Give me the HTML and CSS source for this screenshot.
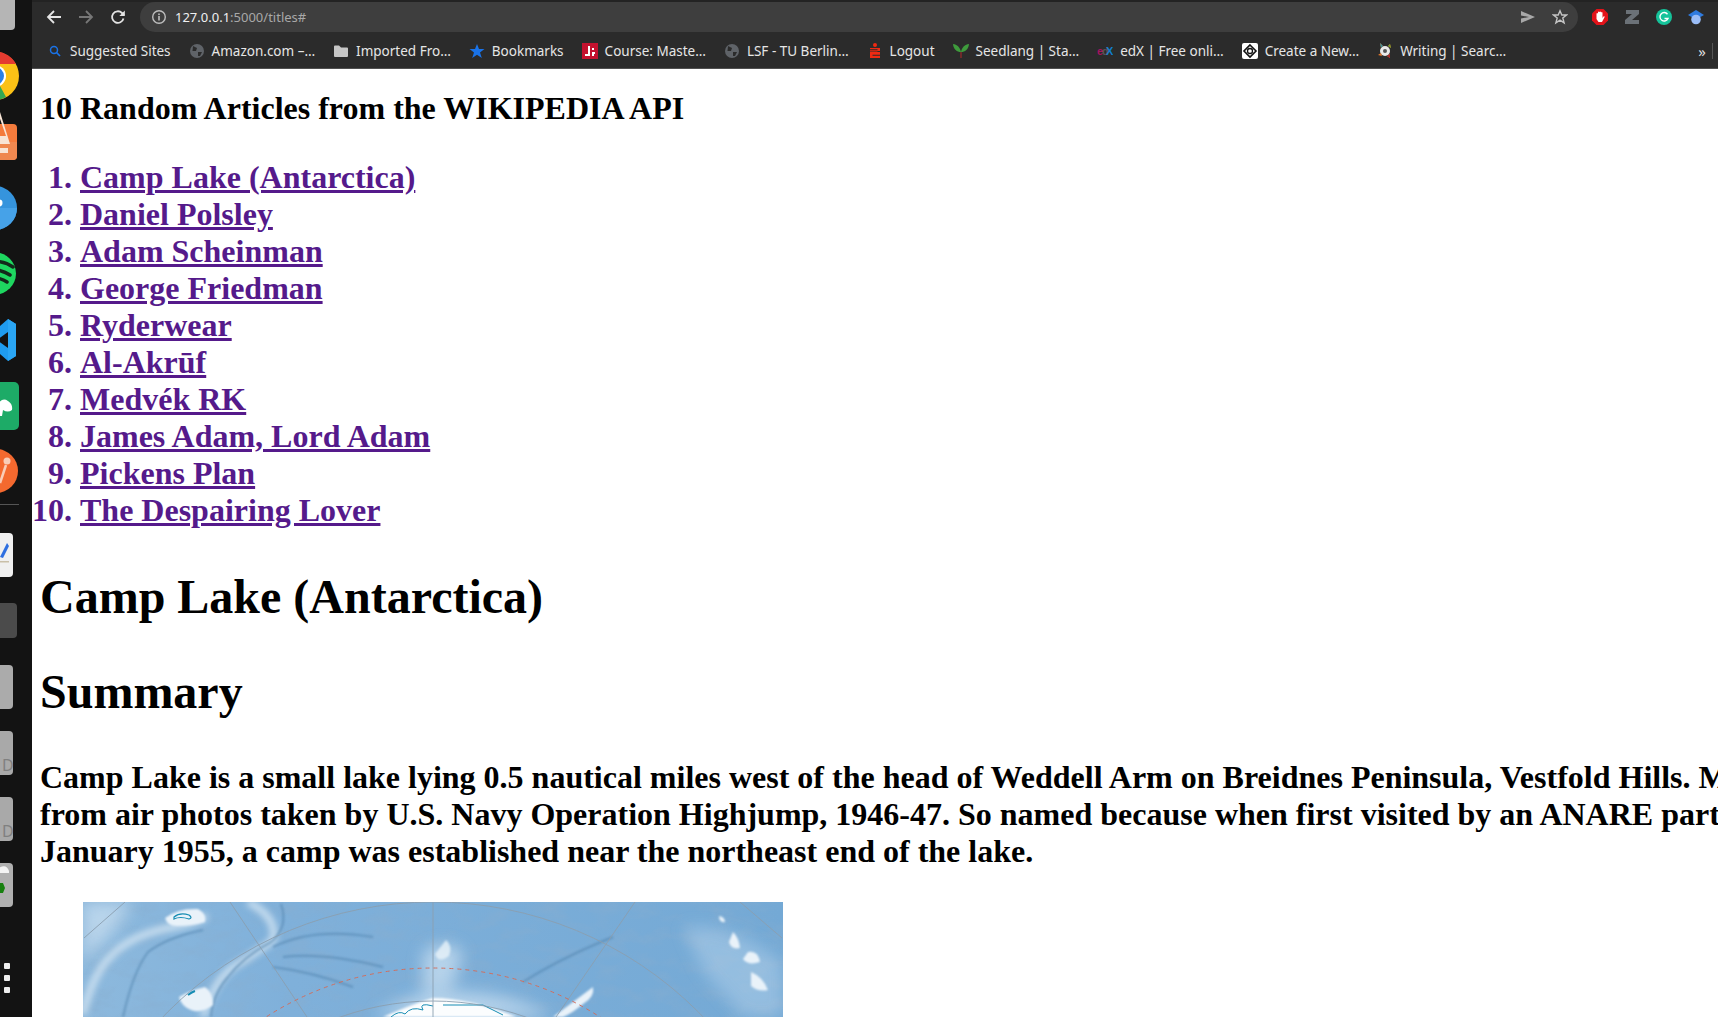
FILE: index.html
```html
<!DOCTYPE html>
<html lang="en">
<head>
<meta charset="utf-8">
<title>127.0.0.1:5000/titles#</title>
<link rel="stylesheet" href="styles.css">
</head>
<body>
<div class="desktop">
  <aside class="dock">
    <svg class="dock-art" width="32" height="1017" viewBox="0 0 32 1017">
      <rect x="-20" y="-10" width="35" height="40" rx="4" fill="#b5b5b5"/>
      <circle cx="-5" cy="76" r="24" fill="#fbc116"/>
      <path d="M-5 76 L-29 76 A24 24 0 0 1 16 64 L-5 64 Z" fill="#e53b30"/>
      <path d="M-5 76 L-5 100 A24 24 0 0 0 6 97 L0 86 Z" fill="#35a853"/>
      <circle cx="-5" cy="76" r="11" fill="#fff"/>
      <circle cx="-5" cy="76" r="9" fill="#2a80e8"/>
      <rect x="-25" y="124" width="42" height="36" rx="4" fill="#f47b3c"/>
      <path d="M-20 142 H17 V156 Q17 160 13 160 H-20 Z" fill="#ef8850"/>
      <path d="M0 112 L10 144 H-8 V136 H6 L-1 116 Z M-2 148 H8 V153 H-2 Z" fill="#f8e5d6"/>
      <circle cx="-5" cy="208" r="22" fill="#3594dd"/>
      <path d="M-27 208 H17 A22 22 0 0 1 -27 208" fill="#46a2e8"/>
      <circle cx="-1" cy="203" r="3.5" fill="#fff"/>
      <circle cx="-5" cy="273.500" r="21" fill="#1ed760"/>
      <path d="M-16 262 Q2 259 13 267 M-16 270 Q0 268 10 275 M-16 278 Q-2 276 7 282" fill="none" stroke="#13291b" stroke-width="3.500" stroke-linecap="round"/>
      <path d="M8 319 L16 324 V356 L8 361 L-10 345 V335 Z" fill="#1f9cf0"/>
      <path d="M8 319 L16 324 V356 L8 361 Z" fill="#2aa6f5"/>
      <path d="M8 332 V348 L-3 340 Z" fill="#131313"/>
      <path d="M-10 335 L-1 339 L-10 347 Z" fill="#0d74c4"/>
      <rect x="-25" y="382" width="44" height="48" rx="5" fill="#1dab67"/>
      <path d="M-4 408 Q1 396 8 401 Q13 404 12 410 Q8 413 3 410 L2 416 H-4 Z" fill="#fff"/>
      <circle cx="-4" cy="471" r="22" fill="#f4692f"/>
      <path d="M0 483 L6 465" stroke="#f9cdb8" stroke-width="2.500"/>
      <circle cx="7" cy="461" r="3.500" fill="#f9cdb8"/>
      <rect x="0" y="504" width="19" height="1" fill="#555"/>
      <rect x="-20" y="533" width="33" height="44" rx="4" fill="#f0f0f0"/>
      <path d="M0 557 L7 543 L9 546 L3 558 Z" fill="#2e6fe0"/>
      <rect x="0" y="561" width="9" height="1.500" fill="#c9bfa8"/>
      <rect x="-20" y="603" width="37" height="35" rx="4" fill="#4b4b4b"/>
      <rect x="-20" y="665" width="33" height="44" rx="4" fill="#ababab"/>
      <rect x="-20" y="731" width="33" height="44" rx="4" fill="#a9a9a9"/>
      <text class="dock-letter" x="2" y="771">D</text>
      <rect x="-20" y="797" width="33" height="44" rx="4" fill="#a9a9a9"/>
      <text class="dock-letter" x="2" y="837">D</text>
      <rect x="-20" y="863" width="33" height="44" rx="4" fill="#b0b0b0"/>
      <path d="M-4 870 Q6 862 9 871 L9 873 H-4 Z" fill="#f4f4f4"/>
      <path d="M-2 883 L3 883 L5 888 L3 893 L-2 893 Z" fill="#17800f"/>
      <rect x="4" y="963" width="6" height="6" rx="1" fill="#eee"/>
      <rect x="4" y="975" width="6" height="6" rx="1" fill="#eee"/>
      <rect x="4" y="987" width="6" height="6" rx="1" fill="#eee"/>
    </svg>
  </aside>

  <div class="browser">
    <header class="chrome">
      <div class="toolbar">
        <span class="tool"><svg width="16" height="16" viewBox="0 0 16 16"><path d="M15 8H2M8 2 2 8l6 6" class="ico-line"/></svg></span>
        <span class="tool"><svg width="16" height="16" viewBox="0 0 16 16"><path d="M1 8h13M8 2l6 6-6 6" class="ico-line ico-dim"/></svg></span>
        <span class="tool"><svg width="16" height="16" viewBox="0 0 16 16"><path d="M13.500 9.500A5.800 5.800 0 1 1 12 4L14 6" class="ico-line"/><path d="M14.800 1.500V7H9.300Z" class="ico-fill"/></svg></span>
        <div class="omnibox">
          <svg class="omni-info" width="16" height="16" viewBox="0 0 16 16"><circle cx="8" cy="8" r="6.300" fill="none" stroke="#bdbdbd" stroke-width="1.400"/><rect x="7.200" y="7" width="1.600" height="4.500" fill="#bdbdbd"/><rect x="7.200" y="4.500" width="1.600" height="1.600" fill="#bdbdbd"/></svg>
          <span class="url"><span class="url-host">127.0.0.1</span>:5000/titles#</span>
          <span class="omni-right">
            <svg width="16" height="14" viewBox="0 0 16 14"><path d="M1 1 15 7 1 13V8.500L9 7 1 5.500Z" fill="#a8a8a8"/></svg>
            <svg width="16" height="16" viewBox="0 0 16 16"><path d="M8 1.800 9.800 6H14.500L10.800 9 12.100 13.800 8 11.100 3.900 13.800 5.200 9 1.500 6H6.200Z" fill="none" stroke="#c4c4c4" stroke-width="1.400"/></svg>
          </span>
        </div>
        <span class="ext"><svg width="18" height="18" viewBox="0 0 18 18"><path d="M5.500 1h7L17 5.500v7L12.500 17h-7L1 12.500v-7Z" fill="#e2131a"/><path d="M5.500 8V5.500a1 1 0 0 1 1.500 0V4a1 1 0 0 1 1.500 0 1 1 0 0 1 1.500 0V4.500a1 1 0 0 1 1.500 0V10l1-1.500c.8-.6 1.400 0 1 .8L11 14H7.500L5.500 11Z" fill="#fff"/></svg></span>
        <span class="ext"><svg width="16" height="16" viewBox="0 0 16 16"><path d="M2 1h13v4L8 11h7v4H1v-4l7-6H2Z" fill="#6b7177"/></svg></span>
        <span class="ext"><svg width="16" height="16" viewBox="0 0 16 16"><circle cx="8" cy="8" r="8" fill="#15c39a"/><path d="M11.500 5.200A4.200 4.200 0 1 0 12 9.500H8.500" fill="none" stroke="#fff" stroke-width="1.400"/></svg></span>
        <span class="ext"><svg width="16" height="16" viewBox="0 0 16 16"><path d="M8 1 16 6 8 10.500 0 6Z" fill="#2f7be0"/><circle cx="8" cy="10.500" r="4.800" fill="#9bbdf7"/></svg></span>
      </div>
      <nav class="bookmarks">
        <a class="mark"><svg width="16" height="16" viewBox="0 0 16 16"><circle cx="7" cy="7" r="3.500" fill="none" stroke="#1a73e8" stroke-width="1.500"/><path d="m9.500 9.500 3.500 3.500" stroke="#1a73e8" stroke-width="1.700"/></svg><span>Suggested Sites</span></a>
        <a class="mark"><svg width="16" height="16" viewBox="0 0 16 16"><circle cx="8" cy="8" r="7" fill="#5f6368"/><path d="M4 3 8 5 7 8 3.500 8ZM9 9l4 0-2 4-2 0Z" fill="#2b2b2b"/></svg><span>Amazon.com –…</span></a>
        <a class="mark"><svg width="16" height="16" viewBox="0 0 16 16"><path d="M1 3.500Q1 2.500 2 2.500H6L8 4.500H14Q15 4.500 15 5.500V13Q15 14 14 14H2Q1 14 1 13Z" fill="#c6c6c6"/></svg><span>Imported Fro…</span></a>
        <a class="mark"><svg width="16" height="16" viewBox="0 0 16 16"><path d="M8 1 10 6H15.500L11 9.500 12.800 15 8 11.700 3.200 15 5 9.500.5 6H6Z" fill="#1a73e8"/></svg><span>Bookmarks</span></a>
        <a class="mark"><svg width="16" height="16" viewBox="0 0 16 16"><rect width="16" height="16" fill="#c4122f"/><path d="M6 3h2v10H3v-2h3ZM10 5h2v2h-2ZM10 9h3v2h-1v2h-2Z" fill="#fff"/></svg><span>Course: Maste…</span></a>
        <a class="mark"><svg width="16" height="16" viewBox="0 0 16 16"><circle cx="8" cy="8" r="7" fill="#5f6368"/><path d="M4 3 8 5 7 8 3.500 8ZM9 9l4 0-2 4-2 0Z" fill="#2b2b2b"/></svg><span>LSF - TU Berlin…</span></a>
        <a class="mark"><svg width="16" height="16" viewBox="0 0 16 16"><circle cx="8" cy="2" r="2" fill="#f02a12"/><path d="M3 5H13V8H3ZM3 9H13V15H3ZM3 7.500H10.500V8.500H3ZM5.500 11H13V12H5.500Z" fill="#f02a12"/><path d="M3 7.200H10.500V6.200H3ZM5.500 11.800H13V12.800H5.500Z" fill="#2b2b2b"/></svg><span>Logout</span></a>
        <a class="mark"><svg width="16" height="16" viewBox="0 0 16 16"><path d="M8 9C4 9 .5 6.500 0 1 4 1.500 7 4 8 9ZM8 9C12 9 15.500 6.500 16 1 12 1.500 9 4 8 9Z" fill="#3e9b3c"/><rect x="7.300" y="9" width="1.400" height="6" fill="#8a2b2b"/></svg><span>Seedlang | Sta…</span></a>
        <a class="mark"><svg width="16" height="16" viewBox="0 0 16 16"><text class="edx-e" x="0" y="12">e</text><text class="edx-d" x="5" y="12">d</text><text class="edx-x" x="9" y="12">X</text></svg><span>edX | Free onli…</span></a>
        <a class="mark"><svg width="16" height="16" viewBox="0 0 16 16"><rect width="16" height="16" rx="2" fill="#fff"/><path d="M8 2 14 8 8 14 2 8Z" fill="none" stroke="#111" stroke-width="1.600"/><circle cx="8" cy="8" r="2.500" fill="none" stroke="#111" stroke-width="1.300"/></svg><span>Create a New…</span></a>
        <a class="mark"><svg width="16" height="16" viewBox="0 0 16 16"><circle cx="8" cy="8" r="5" fill="#e9e9e9"/><circle cx="8" cy="8" r="2" fill="#555"/><path d="M3 0 6 3 4 5ZM13 1 14 5 11 3ZM1 12 4 10 5 13ZM10 13 13 11 13 15Z" fill="#e8792b"/><path d="M3 0 6 3 4 5Z" fill="#3a8f9c"/><path d="M13 1 14 5 11 3Z" fill="#6fa02f"/><path d="M10 13 13 11 13 15Z" fill="#a3262a"/></svg><span>Writing | Searc…</span></a>
        <span class="more">»</span>
        <span class="more-sep"></span>
      </nav>
    </header>

    <main class="page">
      <div class="page-body">
        <h1 class="top-title">10 Random Articles from the WIKIPEDIA API</h1>
        <ol class="titles">
          <li><a href="#">Camp Lake (Antarctica)</a></li>
          <li><a href="#">Daniel Polsley</a></li>
          <li><a href="#">Adam Scheinman</a></li>
          <li><a href="#">George Friedman</a></li>
          <li><a href="#">Ryderwear</a></li>
          <li><a href="#">Al-Akrūf</a></li>
          <li><a href="#">Medvék RK</a></li>
          <li><a href="#">James Adam, Lord Adam</a></li>
          <li><a href="#">Pickens Plan</a></li>
          <li><a href="#">The Despairing Lover</a></li>
        </ol>
        <h2 class="big">Camp Lake (Antarctica)</h2>
        <h2 class="big">Summary</h2>
        <p class="summary">Camp Lake is a small lake lying 0.5 nautical miles west of the head of Weddell Arm on Breidnes Peninsula, Vestfold Hills. Mapped from air photos taken by U.S. Navy Operation Highjump, 1946-47. So named because when first visited by an ANARE party in January 1955, a camp was established near the northeast end of the lake.</p>
        <svg class="map" width="700" height="460" viewBox="0 0 700 460" role="img" aria-label="Map of Antarctica">
          <defs>
            <linearGradient id="sea" x1="0" x2="1" y1="0" y2="0">
              <stop offset="0" stop-color="#8db9dd"/>
              <stop offset=".3" stop-color="#7fb0da"/>
              <stop offset="1" stop-color="#74a9d5"/>
            </linearGradient>
            <filter id="soft" x="-30%" y="-30%" width="160%" height="160%"><feGaussianBlur stdDeviation="3.500"/></filter>
            <filter id="softer" x="-30%" y="-30%" width="160%" height="160%"><feGaussianBlur stdDeviation="8"/></filter>
            <filter id="small" x="-30%" y="-30%" width="160%" height="160%"><feGaussianBlur stdDeviation="1"/></filter>
            <filter id="relief" x="0" y="0" width="100%" height="100%">
              <feTurbulence type="fractalNoise" baseFrequency=".035 .07" numOctaves="4" seed="7"/>
              <feColorMatrix values="0 0 0 0 .25  0 0 0 0 .42  0 0 0 0 .62  1.800 0 0 0 -.75"/>
            </filter>
          </defs>
          <rect width="700" height="460" fill="url(#sea)"/>
          <rect width="700" height="460" filter="url(#relief)" opacity=".55"/>
          <g filter="url(#softer)" fill="#c4dcef" opacity=".8">
            <path d="M0 0H50L30 30 0 60Z"/>
            <path d="M340 50Q362 35 380 50L370 85 340 90Z"/>
            <path d="M600 25Q650 20 700 60V115H660L620 70Z" opacity=".5"/>
            <path d="M290 115Q320 95 350 90 420 85 470 115Z"/>
          </g>
          <g filter="url(#soft)" fill="none" stroke="#d5e6f3" stroke-width="6">
            <path d="M0 112Q10 70 30 52 50 32 90 25 110 22 124 14"/>
            <path d="M165 0Q195 15 190 38 175 50 150 65 130 80 120 115"/>
          </g>
          <g filter="url(#small)" fill="none" stroke="#4d7fa9" stroke-width="2" opacity=".55">
            <path d="M198 2Q206 25 188 40 160 55 145 75 130 92 128 115"/>
            <path d="M40 115Q50 70 65 50 85 35 120 28"/>
            <path d="M190 45Q230 25 290 35M200 55Q240 50 300 65M190 65Q230 70 270 85"/>
            <path d="M440 80Q480 55 530 35"/>
          </g>
          <g filter="url(#small)" fill="#e9f2f9">
            <path d="M82 16Q95 6 115 7 124 12 122 20 110 24 95 24 85 25 82 16Z"/>
            <path d="M96 95Q108 88 122 85 130 90 130 103 118 112 108 108 98 104 96 95Z"/>
            <path d="M363 38Q370 44 366 54 355 62 352 52Z" opacity=".8"/>
            <path d="M650 30Q656 36 657 46 648 48 646 40Z"/>
            <path d="M665 50Q675 48 677 60 665 64 660 57Z"/>
            <path d="M668 70Q680 75 685 88 675 90 668 84Z"/>
            <path d="M636 14Q642 15 642 20 636 21 636 14Z"/>
            <path d="M510 85Q512 95 500 102 488 112 480 115H470Q490 100 510 85Z"/>
            <path d="M300 115Q335 100 350 96 385 96 434 115Z" fill="#fbfdfe"/>
          </g>
          <g fill="none" stroke="#168cb3">
            <path d="M91 15Q97 10 106 13 110 16 106 17 97 14 91 17Z" stroke-width="1.200"/>
            <path d="M105 93Q109 90 112 89" stroke-width="2"/>
            <path d="M308 115Q316 108 322 112 328 104 340 108 335 100 350 104M360 103H400L420 113" stroke-width="1"/>
          </g>
          <g fill="none" stroke="#8b9fb0" stroke-width="1" opacity=".9">
            <circle cx="350" cy="375" r="375"/>
            <circle cx="350" cy="375" r="276"/>
            <path d="M350 0V115M147 0 224 115M552 0 473 115M42 0 1 36M657 0 699 36"/>
          </g>
          <circle cx="350" cy="375" r="309" fill="none" stroke="#cf6f5f" stroke-width="1" stroke-dasharray="4 4"/>
        </svg>
      </div>
    </main>
  </div>
</div>
</body>
</html>
```
FILE: styles.css
```css
* { box-sizing: border-box; }
html, body { margin: 0; height: 100%; overflow: hidden; }
.desktop { display: flex; width: 1718px; height: 1017px; overflow: hidden; background: #fff; }

.dock { flex: 0 0 32px; background: #131313; }
.dock-art { display: block; }
.dock-letter { font: 16px "Noto Sans", sans-serif; fill: #808080; }

.browser { flex: 1; min-width: 0; display: flex; flex-direction: column; overflow: hidden; }

.chrome { flex: 0 0 69px; background: #2b2b2b; border-bottom: 1px solid #505050; border-top: 2px solid #232323; font-family: "Noto Sans", sans-serif; }

.toolbar { display: flex; align-items: center; height: 35px; padding: 0 6px 5px; }
.tool, .ext { flex: 0 0 32px; display: flex; justify-content: center; align-items: center; }
.ico-line { fill: none; stroke: #e4e4e4; stroke-width: 1.800; }
.ico-dim { stroke: #777; }
.ico-fill { fill: #e4e4e4; }

.omnibox { flex: 1; height: 30px; margin: 0 6px; padding: 0 10px 0 11px; display: flex; align-items: center; background: #3e3e3e; border-radius: 15px; }
.omni-info { flex: none; }
.url { margin-left: 8px; font-size: 13px; color: #a8a8a8; }
.url-host { color: #f0f0f0; }
.omni-right { margin-left: auto; display: flex; align-items: center; gap: 16px; }

.bookmarks { display: flex; align-items: center; height: 31px; padding: 0 0 3px 15px; gap: 18px; font-size: 13.500px; color: #e6e6e6; }
.mark { display: flex; align-items: center; gap: 7px; white-space: nowrap; }
.mark svg { flex: none; }
.edx-e, .edx-d, .edx-x { font: bold 11px "Liberation Sans", sans-serif; }
.edx-e { fill: #a3135f; }
.edx-d { fill: #555; }
.edx-x { fill: #0f7fd0; }
.more { margin-left: auto; margin-right: -12px; font-size: 15px; color: #ddd; }
.more-sep { width: 1px; height: 16px; margin-right: 5px; background: #555; }

.page { flex: 1; min-height: 0; overflow: hidden; background: #fff; color: #000; font-family: "Liberation Serif", serif; }
.page-body { width: 1900px; padding: 0 8px; }
.top-title { margin: 21px 0 0; font-size: 32px; line-height: 37px; font-weight: bold; }

.titles { margin: 32px 0 0; padding-left: 40px; font-size: 32px; line-height: 37px; font-weight: bold; color: #551a8b; }
.titles a { color: #551a8b; text-decoration: underline; }

.big { margin: 40px 0 0; font-size: 48px; line-height: 55px; font-weight: bold; }
.summary { width: 1830px; margin: 40px 0 32px; font-size: 32px; line-height: 37px; font-weight: bold; }
.map { display: block; margin-left: 43px; }
```
